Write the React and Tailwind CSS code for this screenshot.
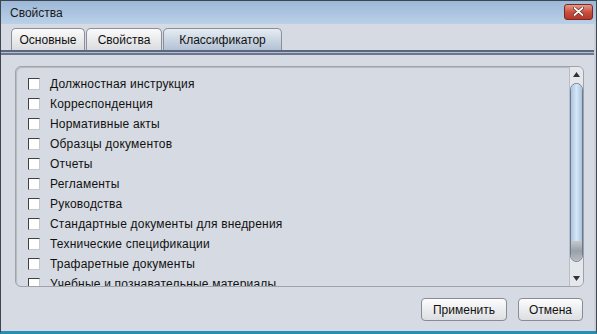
const items = [
  "Должностная инструкция",
  "Корреспонденция",
  "Нормативные акты",
  "Образцы документов",
  "Отчеты",
  "Регламенты",
  "Руководства",
  "Стандартные документы для внедрения",
  "Технические спецификации",
  "Трафаретные документы",
  "Учебные и познавательные материалы",
];

const tabs = [
  { label: "Основные", w: "w-[74px]" },
  { label: "Свойства", w: "w-[76px]" },
  { label: "Классификатор", w: "w-[119px]", active: true },
];

export default function App() {
  return (
    <div
      className="w-[597px] h-[334px] flex flex-col overflow-hidden border border-[#3d4650] border-b-[3px] border-b-[#2a8db3] text-[12px] text-[#111]"
      style={{ fontFamily: '"Liberation Sans", Arial, sans-serif' }}
    >
      {/* title bar */}
      <div className="h-[23px] shrink-0 flex items-center pl-[9px] pr-[3px] bg-gradient-to-b from-[#9db8d7] to-[#bad0e8]">
        <span className="text-[12px] text-[#1a1a1a]">Свойства</span>
        <div className="flex-grow" />
        <CloseButton />
      </div>

      {/* body */}
      <div className="flex-1 flex flex-col bg-[#d6dae2] border-r-2 border-r-[#c9ced7]">
        {/* tabs */}
        <div className="h-[26px] shrink-0 flex items-end gap-[1px] pl-[10px]">
          {tabs.map((t) => (
            <div
              key={t.label}
              className={`${t.w} h-[22px] flex items-center justify-center rounded-t-[5px] border border-b-0 border-[#8a8f98] ${
                t.active
                  ? "bg-gradient-to-b from-[#e6ecf3] to-[#b3c2d4]"
                  : "bg-gradient-to-b from-[#fbfbfb] to-[#dadcdf]"
              }`}
            >
              {t.label}
            </div>
          ))}
        </div>
        <div className="h-[5px] shrink-0 border-t-2 border-t-[#5b6680] border-b-2 border-b-[#6b7690] bg-[#b8bfcc]" />

        {/* panel */}
        <div className="flex-1 flex flex-col pl-[14px] pr-[10px] pt-[11px]">
          <div className="h-[221px] flex rounded-[6px] border border-[#9ea3ab] shadow-[inset_1px_1px_1px_rgba(0,0,0,0.15)] overflow-hidden">
            <div className="flex-1 flex flex-col pl-[12px] pt-[7px] overflow-hidden tracking-[0.2px]">
              {items.map((label) => (
                <div key={label} className="h-[20px] shrink-0 flex items-center gap-[10px]">
                  <span className="w-[12px] h-[12px] shrink-0 bg-white border border-[#404040] border-r-[#c8c8c8] border-b-[#c8c8c8]" />
                  <span className="whitespace-nowrap">{label}</span>
                </div>
              ))}
            </div>
            <ScrollBar />
          </div>

          {/* buttons */}
          <div className="flex justify-end gap-[11px] pt-[11px] pr-[1px]">
            <Button className="w-[86px]">Применить</Button>
            <Button className="w-[65px]">Отмена</Button>
          </div>
        </div>
      </div>
    </div>
  );
}

/* ---------- Components ---------- */

function CloseButton() {
  return (
    <div className="w-[29px] h-[16px] mt-[-2px] flex items-center justify-center rounded-[3px] border border-[#7a2a22] bg-gradient-to-b from-[#e29a8c] via-[#c9503e] to-[#b5382a]">
      <svg width="11" height="9" viewBox="0 0 11 9">
        <path d="M1.5 1 L9.5 8 M9.5 1 L1.5 8" stroke="#5a1a14" strokeWidth="3" strokeLinecap="round" />
        <path d="M1.5 1 L9.5 8 M9.5 1 L1.5 8" stroke="#ffffff" strokeWidth="1.8" strokeLinecap="round" />
      </svg>
    </div>
  );
}

function ScrollBar() {
  return (
    <div className="w-[14px] shrink-0 flex flex-col border-l border-[#b9bec7] bg-[#e4e7ec]">
      <div className="h-[15px] shrink-0 flex items-center justify-center">
        <svg width="7" height="5" viewBox="0 0 7 5">
          <path d="M3.5 0 L7 5 L0 5 Z" fill="#333" />
        </svg>
      </div>
      <div className="flex-1 pt-[1px] pb-[9px]">
        <div className="h-full flex flex-col rounded-[7px] border border-[#6d7a8c] overflow-hidden">
          <div className="flex-1 bg-gradient-to-r from-[#a9c6e3] via-[#d6e6f5] to-[#aac4df]" />
          <div className="h-[20px] bg-gradient-to-b from-[#c4c8ce] via-[#9ba0a8] to-[#b7bbc2]" />
        </div>
      </div>
      <div className="h-[15px] shrink-0 flex items-center justify-center">
        <svg width="7" height="5" viewBox="0 0 7 5">
          <path d="M0 0 L7 0 L3.5 5 Z" fill="#333" />
        </svg>
      </div>
    </div>
  );
}

function Button({ className, children }) {
  return (
    <div
      className={`${className} h-[23px] flex items-center justify-center rounded-[4px] border border-[#888d95] bg-gradient-to-b from-[#fdfdfd] to-[#dcdee2]`}
    >
      {children}
    </div>
  );
}
